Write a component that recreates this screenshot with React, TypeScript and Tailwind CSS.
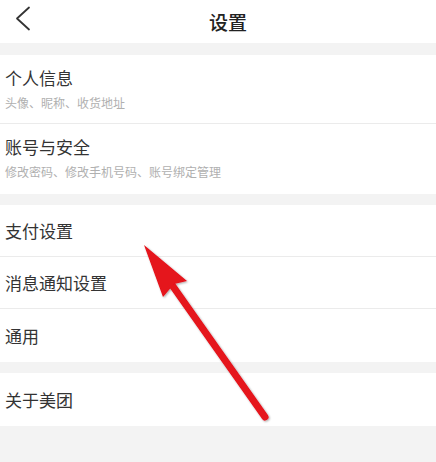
import React from "react";

const font = { fontFamily: '"Noto Sans CJK SC", "Noto Sans", sans-serif' };

function Row({ title, sub, h, border }: { title: string; sub?: string; h: string; border?: boolean }) {
  return (
    <div className={`bg-white pl-[5px] flex flex-col ${sub ? "justify-start pt-[13px]" : "justify-center"} ${h} ${border ? "border-b border-[#ebebeb]" : ""}`}>
      <div className="text-[17px] leading-[20px] text-[#333333]">{title}</div>
      {sub && <div className="mt-[7px] text-[12px] leading-[16px] text-[#b0b0b0]">{sub}</div>}
    </div>
  );
}

export default function App() {
  return (
    <div className="relative w-[436px] h-[462px] bg-[#f3f3f3] overflow-hidden" style={font}>
      <div className="h-[43px] bg-white flex items-center relative">
        <svg className="absolute left-[14px] top-[6px]" width="18" height="26" viewBox="0 0 18 26">
          <path d="M15 1.5 L3 12.5 L15 23.5" fill="none" stroke="#333" strokeWidth="1.8" strokeLinecap="round" strokeLinejoin="round" />
        </svg>
        <div className="ml-[209px] text-[19px] leading-[24px] font-medium text-[#222]">设置</div>
      </div>
      <div className="h-[12px]" />
      <Row title="个人信息" sub="头像、昵称、收货地址" h="h-[69px]" border />
      <Row title="账号与安全" sub="修改密码、修改手机号码、账号绑定管理" h="h-[70px]" />
      <div className="h-[11px]" />
      <Row title="支付设置" h="h-[52px]" border />
      <Row title="消息通知设置" h="h-[52px]" border />
      <Row title="通用" h="h-[53px]" />
      <div className="h-[11px]" />
      <Row title="关于美团" h="h-[53px]" />
      <svg className="absolute left-0 top-0 pointer-events-none" width="436" height="462" viewBox="0 0 436 462">
        <defs>
          <filter id="sh" x="-20%" y="-20%" width="140%" height="140%">
            <feGaussianBlur in="SourceAlpha" stdDeviation="1" />
            <feOffset dx="0.5" dy="1" result="b" />
            <feComponentTransfer><feFuncA type="linear" slope="0.35" /></feComponentTransfer>
            <feMerge><feMergeNode /><feMergeNode in="SourceGraphic" /></feMerge>
          </filter>
        </defs>
        <g filter="url(#sh)">
          <line x1="172" y1="285" x2="265" y2="417" stroke="#e5121a" strokeWidth="7" strokeLinecap="round" />
          <polygon points="144,245 187,281 174,284 163,297" fill="#e5121a" />
        </g>
      </svg>
    </div>
  );
}
